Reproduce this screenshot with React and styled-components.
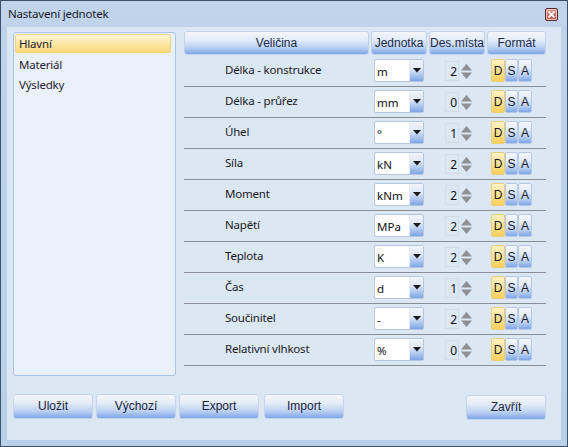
import React from "react";
import styled, { createGlobalStyle } from "styled-components";

const Global = createGlobalStyle`
  html, body { margin: 0; padding: 0; overflow: hidden; background: #fff; }
  * { box-sizing: border-box; }
`;

const uiFont = `"Noto Sans", "Open Sans", sans-serif`;
const btnFont = `"Liberation Sans", Arial, sans-serif`;

const Window = styled.div`
  width: 568px;
  height: 447px;
  border: 1px solid #3e5068;
  background: linear-gradient(#c1d4ec 0px, #bfd3eb 26px, #b9d0ea 100%);
  display: flex;
  flex-direction: column;
  padding: 0 6px 6px 6px;
  font-family: ${uiFont};
`;

const TitleBar = styled.div`
  height: 26px;
  display: flex;
  align-items: center;
  justify-content: space-between;
  padding: 0 3px 2px 1px;
`;

const Title = styled.span`
  font-size: 11.5px;
  letter-spacing: -0.2px;
  color: #1b1b2a;
`;

const CloseBtn = styled.div`
  width: 13px;
  height: 13px;
  border: 1px solid #5c2a28;
  border-radius: 2px;
  background: linear-gradient(#e9a596, #c56a5c 60%, #b4554a);
  box-shadow: inset 0 0 0 1px #f1c4bb;
  display: flex;
  align-items: center;
  justify-content: center;
  margin-top: 2px;
`;

const Client = styled.div`
  flex: 1;
  background: #dce7f4;
  display: flex;
  flex-direction: column;
  padding: 4px 15px 0 6px;
`;

const Main = styled.div`
  display: flex;
  gap: 8px;
`;

const List = styled.div`
  width: 163px;
  height: 344px;
  margin-top: 1px;
  border: 1px solid #a9c4e9;
  border-radius: 3px;
  background: #ebf1fa;
  padding: 1px 4px 1px 1px;
  display: flex;
  flex-direction: column;
`;

const ListItem = styled.div`
  height: ${p => (p.$selected ? "19px" : "20px")};
  margin-bottom: ${p => (p.$selected ? "1px" : "0")};
  display: flex;
  align-items: center;
  padding-left: 3px;
  font-size: 11.5px;
  letter-spacing: -0.2px;
  color: #1d2230;
  border: 1px solid ${p => (p.$selected ? "#efd37a" : "transparent")};
  border-radius: 2px;
  background: ${p =>
    p.$selected ? "linear-gradient(#fff5d6, #fde7a6 50%, #fbd97c)" : "transparent"};
`;

const Table = styled.div`
  width: 362px;
  display: flex;
  flex-direction: column;
`;

const cols = "185px 56px 56px 59px";

const HeaderRow = styled.div`
  display: grid;
  grid-template-columns: ${cols};
  column-gap: 2px;
  height: 24px;
`;

const blueGrad = "linear-gradient(#f4f7fc 0%, #e4ecf8 35%, #bcd1f1 70%, #7ea6e8 100%)";

const HeaderCell = styled.div`
  border: 1px solid #c3d3ea;
  border-radius: 3px;
  background: ${blueGrad};
  display: flex;
  align-items: center;
  justify-content: center;
  font-family: ${btnFont};
  font-size: 12px;
  color: #1c2a4a;
  padding-bottom: 1px;
`;

const Rows = styled.div`
  margin-top: 1px;
  display: flex;
  flex-direction: column;
`;

const Row = styled.div`
  display: grid;
  grid-template-columns: ${cols};
  column-gap: 2px;
  height: 31px;
  border-bottom: 1px solid #8a8f97;
  align-items: center;
`;

const Label = styled.div`
  padding-left: 41px;
  font-size: 11.5px;
  letter-spacing: -0.2px;
  color: #1a1a22;
  padding-bottom: 3px;
`;

const CellCenter = styled.div`
  display: flex;
  justify-content: center;
  align-items: center;
`;

const CellLeft = styled.div`
  display: flex;
  align-items: center;
  padding-left: 4px;
`;

const Combo = styled.div`
  width: 50px;
  height: 23px;
  border: 1px solid #b6c6dc;
  border-radius: 2px;
  background: #fff;
  display: flex;
  margin-top: -1px;
`;

const ComboText = styled.div`
  flex: 1;
  display: flex;
  align-items: center;
  padding: 2px 0 0 2px;
  font-size: 11.5px;
  color: #111;
`;

const ComboBtn = styled.div`
  width: 14px;
  background: linear-gradient(#f2f6fc 0%, #dfe8f6 40%, #a9c3ee 75%, #7ea5e6 100%);
  display: flex;
  align-items: center;
  justify-content: center;
  border-left: 1px solid #e3eaf4;
`;

const Spinner = styled.div`
  display: flex;
  align-items: center;
  gap: 2px;
  margin-left: 3px;
`;

const SpinBox = styled.div`
  width: 14px;
  height: 20px;
  border: 1px solid #d2dbe7;
  display: flex;
  align-items: center;
  justify-content: flex-end;
  padding: 1px 1px 0 0;
  font-size: 12px;
  color: #111;
`;

const FmtBtn = styled.div`
  width: ${p => p.$w}px;
  height: 23px;
  border: 1px solid ${p => (p.$active ? "#e9cd7c" : "#b7c9e4")};
  border-radius: 2px;
  background: ${p =>
    p.$active ? "linear-gradient(#fff2c4, #fde39a 45%, #f9cf5a)" : blueGrad};
  display: flex;
  align-items: center;
  justify-content: center;
  font-family: ${btnFont};
  font-size: 12px;
  color: #151a2a;
  margin-top: -1px;
`;

const Footer = styled.div`
  margin-top: 18px;
  display: flex;
  align-items: flex-start;
`;

const Button = styled.div`
  width: 80px;
  height: 25px;
  margin-right: ${p => p.$mr || 0}px;
  margin-left: ${p => (p.$right ? "auto" : "0")};
  margin-top: ${p => (p.$right ? "1px" : "0")};
  border: 1px solid #c5d4ea;
  border-radius: 3px;
  background: ${blueGrad};
  display: flex;
  align-items: center;
  justify-content: center;
  font-family: ${btnFont};
  font-size: 12px;
  color: #1c2440;
  padding-bottom: 2px;
`;

const ArrowDown = () => (
  <svg width="8" height="5" viewBox="0 0 8 5">
    <path d="M0 0H8L4 4.5Z" fill="#1a1a1a" />
  </svg>
);

const SpinArrows = () => (
  <svg width="11" height="17" viewBox="0 0 11 17">
    <path d="M0 7.5L5.5 1L11 7.5Z" fill="#8e9196" />
    <path d="M0 9.5L5.5 16L11 9.5Z" fill="#8e9196" />
  </svg>
);

const CloseX = () => (
  <svg width="7" height="7" viewBox="0 0 7 7">
    <path d="M0.5 0.5L6.5 6.5M6.5 0.5L0.5 6.5" stroke="#fff" strokeWidth="1.8" />
  </svg>
);

const rows = [
  ["Délka - konstrukce", "m", 2],
  ["Délka - průřez", "mm", 0],
  ["Úhel", "°", 1],
  ["Síla", "kN", 2],
  ["Moment", "kNm", 2],
  ["Napětí", "MPa", 2],
  ["Teplota", "K", 2],
  ["Čas", "d", 1],
  ["Součinitel", "-", 2],
  ["Relativní vlhkost", "%", 0],
];

export default function App() {
  return (
    <>
      <Global />
      <Window>
        <TitleBar>
          <Title>Nastavení jednotek</Title>
          <CloseBtn>
            <CloseX />
          </CloseBtn>
        </TitleBar>
        <Client>
          <Main>
            <List>
              <ListItem $selected>Hlavní</ListItem>
              <ListItem>Materiál</ListItem>
              <ListItem>Výsledky</ListItem>
            </List>
            <Table>
              <HeaderRow>
                <HeaderCell>Veličina</HeaderCell>
                <HeaderCell>Jednotka</HeaderCell>
                <HeaderCell>Des.místa</HeaderCell>
                <HeaderCell>Formát</HeaderCell>
              </HeaderRow>
              <Rows>
                {rows.map(([name, unit, dec]) => (
                  <Row key={name}>
                    <Label>{name}</Label>
                    <CellCenter>
                      <Combo>
                        <ComboText>{unit}</ComboText>
                        <ComboBtn>
                          <ArrowDown />
                        </ComboBtn>
                      </Combo>
                    </CellCenter>
                    <CellCenter>
                      <Spinner>
                        <SpinBox>{dec}</SpinBox>
                        <SpinArrows />
                      </Spinner>
                    </CellCenter>
                    <CellLeft>
                      <FmtBtn $w={14} $active>D</FmtBtn>
                      <FmtBtn $w={13}>S</FmtBtn>
                      <FmtBtn $w={14}>A</FmtBtn>
                    </CellLeft>
                  </Row>
                ))}
              </Rows>
            </Table>
          </Main>
          <Footer>
            <Button $mr={3}>Uložit</Button>
            <Button $mr={3}>Výchozí</Button>
            <Button $mr={5}>Export</Button>
            <Button>Import</Button>
            <Button $right>Zavřít</Button>
          </Footer>
        </Client>
      </Window>
    </>
  );
}
